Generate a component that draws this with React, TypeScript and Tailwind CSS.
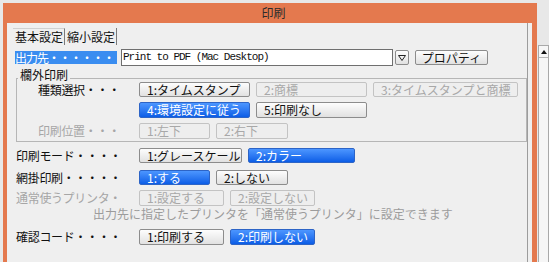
import React from 'react'

type Kind = 'normal' | 'on' | 'off'

const kindClass: Record<Kind, string> = {
  normal: 'border-[#8c8c8c] bg-gradient-to-b from-[#fdfdfd] to-[#e1e1e1] text-[#111111]',
  on: 'border-[#2d64c6] bg-gradient-to-b from-[#4c96ff] to-[#0a5de6] text-white',
  off: 'border-[#c3c3c3] bg-[#eeeeee] text-[#a8a8a8]',
}

const Btn = ({ label, kind = 'normal', w, h = 'h-[16px]' }: { label: string; kind?: Kind; w: string; h?: string }) => (
  <div className={`flex shrink-0 items-center rounded-[2px] border pl-[7px] ${h} ${w} ${kindClass[kind]}`}>
    <span className="whitespace-nowrap">{label}</span>
  </div>
)

const Row = ({ label, off, lw, mt, children }: { label: string; off?: boolean; lw: string; mt: string; children: React.ReactNode }) => (
  <div className={`flex items-center ${mt}`}>
    <div className={`shrink-0 whitespace-nowrap tracking-[-0.3px] ${lw} ${off ? 'text-[#a6a6a6]' : 'text-[#111111]'}`}>{label}</div>
    <div className="flex gap-[6px]">{children}</div>
  </div>
)

export default function App() {
  return (
    <div className="flex h-[262px] w-[549px] items-start overflow-hidden bg-[#e8e8e8] pl-[3px] pt-[3px] font-['Noto_Sans_CJK_JP',sans-serif] text-[12px] leading-none">
      {/* window */}
      <div className="flex h-[259px] w-[534px] shrink-0 flex-col border-l-4 border-r-[5px] border-[#e4794e] bg-[#efefef]">
        <div className="flex h-[20px] shrink-0 items-center justify-center bg-[#e4794e] pl-[8px] text-[#2b2b2b]">印刷</div>

        <div className="mr-[4px] flex flex-1 flex-col border-r border-[#9c9c9c]">
          {/* tabs */}
          <div className="ml-[6px] mt-[5px] flex h-[17px]">
            <div className="flex w-[52px] items-center border-r border-t border-r-[#7a7a7a] border-t-[#d0d0d0] pl-[2px] text-[#111111]">基本設定</div>
            <div className="flex w-[52px] items-center border-r border-[#7a7a7a] pl-[2px] text-[#111111]">縮小設定</div>
          </div>

          {/* output */}
          <div className="ml-[8px] mt-[4px] flex h-[17px] items-center">
            <div className="flex h-[13px] w-[102px] shrink-0 items-center whitespace-nowrap bg-[#3a8df0] tracking-[-1px] text-white">出力先・・・・・・</div>
            <div className="ml-[4px] flex h-[17px] w-[272px] shrink-0 items-center border border-[#6f6f6f] bg-white pl-[1px] font-['Liberation_Mono',monospace] text-[11px] tracking-[-1px] text-[#111111]">
              Print to PDF (Mac Desktop)
            </div>
            <div className="ml-[2px] flex h-[15px] w-[14px] shrink-0 items-center justify-center rounded-[2px] border border-[#8c8c8c] bg-gradient-to-b from-[#fdfdfd] to-[#e1e1e1]">
              <svg width="8" height="6" viewBox="0 0 8 6">
                <polygon points="0.5,0.5 7.5,0.5 4,5.5" fill="none" stroke="#222" strokeWidth="1" />
              </svg>
            </div>
            <div className="ml-[6px] flex h-[15px] w-[73px] shrink-0 items-center justify-center rounded-[2px] border border-[#8c8c8c] bg-gradient-to-b from-[#fdfdfd] to-[#e1e1e1] text-[#111111]">
              プロパティ
            </div>
          </div>

          {/* margin print group */}
          <fieldset className="ml-[9px] mt-[3px] w-[511px] border border-[#b6b6b6] pb-[2px]">
            <legend className="ml-[1px] px-[2px] pb-[6px] leading-[12px] text-[#111111]">欄外印刷</legend>
            <div className="-mt-[5px] pl-[21px]">
              <Row label="種類選択・・・" lw="w-[101px]" mt="mt-0">
                <Btn label="1:タイムスタンプ" w="w-[111px]" h="h-[15px]" />
                <Btn label="2:商標" kind="off" w="w-[111px]" h="h-[15px]" />
                <Btn label="3:タイムスタンプと商標" kind="off" w="w-[145px]" h="h-[15px]" />
              </Row>
              <Row label="" lw="w-[101px]" mt="mt-[5px]">
                <Btn label="4:環境設定に従う" kind="on" w="w-[111px]" />
                <Btn label="5:印刷なし" w="w-[111px]" />
              </Row>
              <Row label="印刷位置・・・" off lw="w-[101px]" mt="mt-[5px]">
                <Btn label="1:左下" kind="off" w="w-[71px]" />
                <Btn label="2:右下" kind="off" w="w-[72px]" />
              </Row>
            </div>
          </fieldset>

          <div className="pl-[9px]">
            <Row label="印刷モード・・・・" lw="w-[123px]" mt="mt-[6px]">
              <Btn label="1:グレースケール" w="w-[103px]" h="h-[15px]" />
              <Btn label="2:カラー" kind="on" w="w-[107px]" h="h-[15px]" />
            </Row>
            <Row label="網掛印刷・・・・・" lw="w-[123px]" mt="mt-[7px]">
              <Btn label="1:する" kind="on" w="w-[71px]" h="h-[15px]" />
              <Btn label="2:しない" w="w-[72px]" h="h-[15px]" />
            </Row>
            <Row label="通常使うプリンタ・" off lw="w-[123px]" mt="mt-[5px]">
              <Btn label="1:設定する" kind="off" w="w-[85px]" />
              <Btn label="2:設定しない" kind="off" w="w-[85px]" />
            </Row>
            <div className="mt-[1px] flex h-[13px] items-center whitespace-nowrap pl-[77px] text-[#9c9c9c]">
              出力先に指定したプリンタを「通常使うプリンタ」に設定できます
            </div>
            <Row label="確認コード・・・・" lw="w-[123px]" mt="mt-[9px]">
              <Btn label="1:印刷する" w="w-[85px]" />
              <Btn label="2:印刷しない" kind="on" w="w-[85px]" />
            </Row>
          </div>
        </div>
      </div>

      {/* scrollbar behind the window */}
      <div className="ml-[1px] mt-[42px] flex h-[220px] w-[11px] shrink-0 flex-col border border-[#a9a9a9] bg-[#f6f6f6]">
        <div className="flex h-[12px] items-center justify-center border-b border-[#b5b5b5]">
          <svg width="6" height="4" viewBox="0 0 6 4">
            <polygon points="3,0 6,4 0,4" fill="#111" />
          </svg>
        </div>
      </div>
    </div>
  )
}
